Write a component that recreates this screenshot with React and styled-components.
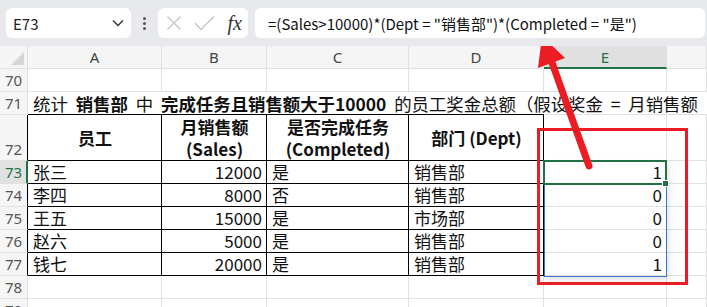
import styled, { createGlobalStyle } from "styled-components";

const GlobalStyle = createGlobalStyle`
  body {
    margin: 0;
    background: #ffffff;
    font-family: "Noto Sans CJK SC", "Noto Sans", sans-serif;
  }
`;

const COLS = [28, 134, 105, 142, 135, 123];
const GREEN = "#217346";
const GRID = "#e1e1e1";

const rows = [
  { n: 73, name: "张三", sales: 12000, done: "是", dept: "销售部", result: 1 },
  { n: 74, name: "李四", sales: 8000, done: "否", dept: "销售部", result: 0 },
  { n: 75, name: "王五", sales: 15000, done: "是", dept: "市场部", result: 0 },
  { n: 76, name: "赵六", sales: 5000, done: "是", dept: "销售部", result: 0 },
  { n: 77, name: "钱七", sales: 20000, done: "是", dept: "销售部", result: 1 },
];

//Toolbar
const Toolbar = styled.div`
  height: 46px;
  background: #e7e9ec;
  display: flex;
  align-items: center;
  padding: 0 0 0 6px;
  box-sizing: border-box;
`;

const Box = styled.div`
  height: 30px;
  background: #ffffff;
  border-radius: 6px;
  display: flex;
  align-items: center;
  box-sizing: border-box;
`;

const NameBox = styled(Box)`
  width: 125px;
  padding: 0 7px;
  justify-content: space-between;
  font-size: 15px;
  color: #222;
`;

const Dots = styled.div`
  width: 27px;
  display: flex;
  flex-direction: column;
  align-items: center;
  gap: 2px;
  span {
    width: 3px;
    height: 3px;
    background: #555;
    border-radius: 50%;
  }
`;

const FxBox = styled(Box)`
  width: 90px;
  padding: 0 6px 0 8px;
  justify-content: space-between;
`;

const Fx = styled.span`
  font-family: "Liberation Serif", "DejaVu Serif", serif;
  font-style: italic;
  font-size: 20px;
  color: #333;
  line-height: 1;
`;

const FormulaBox = styled(Box)`
  flex: 1;
  margin-left: 7px;
  margin-right: 2px;
  padding-left: 13px;
  font-size: 15px;
  color: #111;
  white-space: nowrap;
`;

//Sheet
const Sheet = styled.div`
  position: relative;
  display: grid;
  grid-template-columns: ${COLS.map((c) => c + "px").join(" ")} 1fr;
  grid-auto-rows: 23px;
  font-size: 17px;
  color: #111;
`;

const ColHead = styled.div`
  background: ${(p) => (p.$active ? "#e0e0e0" : "#f5f5f5")};
  color: ${(p) => (p.$active ? GREEN : "#444")};
  border-right: 1px solid ${GRID};
  border-bottom: ${(p) => (p.$active ? `2px solid ${GREEN}` : `1px solid ${GRID}`)};
  display: flex;
  align-items: center;
  justify-content: center;
  font-family: "Noto Sans", sans-serif;
  font-size: 15px;
  box-sizing: border-box;
`;

const Corner = styled(ColHead)`
  position: relative;
  &::after {
    content: "";
    position: absolute;
    right: 3px;
    bottom: 3px;
    border-style: solid;
    border-width: 0 0 13px 13px;
    border-color: transparent transparent #d6d6d6 transparent;
  }
`;

const RowHead = styled.div`
  background: ${(p) => (p.$active ? "#e1e1e1" : "#f5f5f5")};
  color: ${(p) => (p.$active ? GREEN : "#555")};
  border-bottom: 1px solid ${GRID};
  border-right: ${(p) =>
    p.$active ? `2px solid ${GREEN}` : p.$table ? "1px solid #000" : `1px solid ${GRID}`};
  grid-row: span ${(p) => p.$span || 1};
  display: flex;
  align-items: flex-end;
  padding: 0 0 0 5px;
  font-family: "Noto Sans", sans-serif;
  font-size: 15px;
  line-height: 22px;
  box-sizing: border-box;
`;

const Cell = styled.div`
  border-right: 1px solid ${(p) => (p.$table ? "#000" : GRID)};
  border-bottom: 1px solid ${(p) => (p.$table ? "#000" : GRID)};
  display: flex;
  flex-direction: column;
  justify-content: center;
  align-items: ${(p) =>
    p.$align === "right" ? "flex-end" : p.$align === "center" ? "center" : "flex-start"};
  padding: 0 4px 0 5px;
  font-weight: ${(p) => (p.$bold ? 700 : 400)};
  line-height: 22px;
  white-space: nowrap;
  box-sizing: border-box;
  grid-row: span ${(p) => p.$span || 1};
`;

const Line = styled.span`
  display: block;
  height: 22px;
`;

const TitleCell = styled.div`
  grid-column: 2 / -1;
  display: flex;
  align-items: center;
  padding-left: 5px;
  font-size: 17.4px;
  word-spacing: 4px;
  white-space: pre;
  overflow: hidden;
  box-sizing: border-box;
  background: linear-gradient(to right, #000 516px, ${GRID} 516px) bottom left / 100% 1px no-repeat;
  b {
    font-weight: 700;
  }
`;

//Overlays
const ActiveCell = styled.div`
  position: absolute;
  left: 543px;
  top: 114px;
  width: 124px;
  height: 25px;
  border: 2px solid ${GREEN};
  box-sizing: border-box;
  &::after {
    content: "";
    position: absolute;
    right: -4px;
    bottom: -4px;
    width: 5px;
    height: 5px;
    background: ${GREEN};
    border: 1px solid #fff;
  }
`;

const Range = styled.div`
  position: absolute;
  left: 544px;
  top: 115px;
  width: 123px;
  height: 116px;
  border: 1px solid #3b73d0;
  box-sizing: border-box;
  box-shadow: 2px 3px 6px rgba(0, 0, 0, 0.12);
`;

const RedBox = styled.div`
  position: absolute;
  left: 537px;
  top: 82px;
  width: 151px;
  height: 157px;
  border: 3px solid #ec1c24;
  box-sizing: border-box;
`;

const Arrow = styled.svg`
  position: absolute;
  left: 0;
  top: 0;
  pointer-events: none;
`;

const Chevron = () => (
  <svg width="12" height="8" viewBox="0 0 12 8">
    <path d="M1 1.5 L6 6.5 L11 1.5" fill="none" stroke="#333" strokeWidth="1.4" />
  </svg>
);

const Cross = () => (
  <svg width="16" height="16" viewBox="0 0 16 16">
    <path d="M1.5 1.5 L14.5 14.5 M14.5 1.5 L1.5 14.5" stroke="#c4c4c4" strokeWidth="1.3" />
  </svg>
);

const Check = () => (
  <svg width="21" height="16" viewBox="0 0 21 16">
    <path d="M1 8 L7 14.5 L20 1.5" fill="none" stroke="#c4c4c4" strokeWidth="1.3" />
  </svg>
);

const letters = ["A", "B", "C", "D", "E", "F"];

const App = () => {
  return (
    <>
      <GlobalStyle />
      <Toolbar>
        <NameBox>
          <span>E73</span>
          <Chevron />
        </NameBox>
        <Dots>
          <span />
          <span />
          <span />
        </Dots>
        <FxBox>
          <Cross />
          <Check />
          <Fx>fx</Fx>
        </FxBox>
        <FormulaBox>=(Sales&gt;10000)*(Dept = "销售部")*(Completed = "是")</FormulaBox>
      </Toolbar>
      <Sheet>
        <Corner />
        {letters.map((l) => (
          <ColHead key={l} $active={l === "E"}>
            {l === "F" ? "" : l}
          </ColHead>
        ))}

        <RowHead>70</RowHead>
        {letters.map((l) => (
          <Cell key={l} />
        ))}

        <RowHead>71</RowHead>
        <TitleCell>
          统计 <b>销售部</b> 中 <b>完成任务且销售额大于10000</b> 的员工奖金总额（假设奖金 = 月销售额
        </TitleCell>

        <RowHead $span={2} $table>72</RowHead>
        <Cell $span={2} $table $bold $align="center">员工</Cell>
        <Cell $span={2} $table $bold $align="center">
          <Line>月销售额</Line>
          <Line>(Sales)</Line>
        </Cell>
        <Cell $span={2} $table $bold $align="center">
          <Line>是否完成任务</Line>
          <Line>(Completed)</Line>
        </Cell>
        <Cell $span={2} $table $bold $align="center">部门 (Dept)</Cell>
        <Cell $span={2} />
        <Cell $span={2} />

        {rows.map((r) => (
          <Row key={r.n} r={r} />
        ))}

        {[78, 79].map((n) => (
          <Blank key={n} n={n} />
        ))}

        <Range />
        <ActiveCell />
        <RedBox />
        <Arrow width="707" height="261" viewBox="0 46 707 261">
          <line x1="589" y1="166" x2="550" y2="57" stroke="#ec1c24" strokeWidth="7" strokeLinecap="round" />
          <polygon points="542,36 538,68 565,58" fill="#ec1c24" />
        </Arrow>
      </Sheet>
    </>
  );
};

const Row = ({ r }) => (
  <>
    <RowHead $active={r.n === 73} $table>{r.n}</RowHead>
    <Cell $table>{r.name}</Cell>
    <Cell $table $align="right">{r.sales}</Cell>
    <Cell $table>{r.done}</Cell>
    <Cell $table>{r.dept}</Cell>
    <Cell $align="right">{r.result}</Cell>
    <Cell />
  </>
);

const Blank = ({ n }) => (
  <>
    <RowHead>{n}</RowHead>
    {letters.map((l) => (
      <Cell key={l} />
    ))}
  </>
);

export default App;
